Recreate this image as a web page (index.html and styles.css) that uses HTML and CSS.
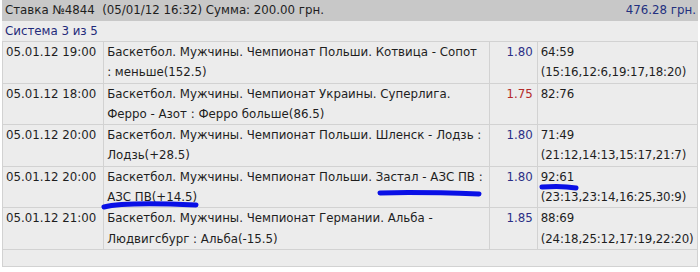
FILE: index.html
```html
<!DOCTYPE html>
<html lang="ru">
<head>
<meta charset="utf-8">
<link rel="stylesheet" href="styles.css">
</head>
<body>
<div class="bet">
  <div class="bet-head">
    <span class="bet-title">Ставка №4844&nbsp;&nbsp;(05/01/12 16:32) Сумма: 200.00 грн.</span>
    <span class="bet-win">476.28 грн.</span>
  </div>
  <div class="bet-system">Система 3 из 5</div>
  <table class="events">
    <tr>
      <td class="date">05.01.12 19:00</td>
      <td class="event">Баскетбол. Мужчины. Чемпионат Польши. Котвица - Сопот<br>: меньше(152.5)</td>
      <td class="odd">1.80</td>
      <td class="score">64:59<br>(15:16,12:6,19:17,18:20)</td>
    </tr>
    <tr>
      <td class="date">05.01.12 18:00</td>
      <td class="event">Баскетбол. Мужчины. Чемпионат Украины. Суперлига.<br>Ферро - Азот : Ферро больше(86.5)</td>
      <td class="odd lost">1.75</td>
      <td class="score">82:76<br>&nbsp;</td>
    </tr>
    <tr>
      <td class="date">05.01.12 20:00</td>
      <td class="event">Баскетбол. Мужчины. Чемпионат Польши. Шленск - Лодзь :<br>Лодзь(+28.5)</td>
      <td class="odd">1.80</td>
      <td class="score">71:49<br>(21:12,14:13,15:17,21:7)</td>
    </tr>
    <tr>
      <td class="date">05.01.12 20:00</td>
      <td class="event">Баскетбол. Мужчины. Чемпионат Польши. Застал - АЗС ПВ :<br>АЗС ПВ(+14.5)</td>
      <td class="odd">1.80</td>
      <td class="score">92:61<br>(23:13,23:14,16:25,30:9)</td>
    </tr>
    <tr>
      <td class="date">05.01.12 21:00</td>
      <td class="event">Баскетбол. Мужчины. Чемпионат Германии. Альба -<br>Людвигсбург : Альба(-15.5)</td>
      <td class="odd">1.85</td>
      <td class="score">88:69<br>(24:18,25:12,17:19,22:20)</td>
    </tr>
    <tr class="empty"><td colspan="4"></td></tr>
  </table>
  <svg class="marks" width="700" height="272" viewBox="0 0 700 272">
    <path d="M104 207 C 120 203, 150 203, 196 205" stroke="#0a10e6" stroke-width="5" fill="none" stroke-linecap="round"/>
    <path d="M380 193 C 410 192, 450 193, 479 194" stroke="#0a10e6" stroke-width="5" fill="none" stroke-linecap="round"/>
    <path d="M542 187 C 555 186, 565 186, 576 188" stroke="#0a10e6" stroke-width="5" fill="none" stroke-linecap="round"/>
  </svg>
</div>
</body>
</html>
```
FILE: styles.css
```css
html, body {
  margin: 0;
  padding: 0;
  background: #ffffff;
}
body {
  font-family: "DejaVu Sans", Verdana, sans-serif;
  font-size: 11.8px;
  color: #1e1e1e;
}
.bet {
  position: relative;
  width: 696px;
  margin: 0 0 0 2px;
}
.bet-head {
  display: flex;
  justify-content: space-between;
  background: #c8c8c8;
  height: 21px;
  line-height: 21px;
  padding: 0 2px 0 3px;
}
.bet-win {
  color: #23307f;
}
.bet-system {
  background: #ececec;
  color: #1f2a7a;
  height: 20px;
  line-height: 20px;
  padding: 0 3px;
}
.events {
  width: 696px;
  border-collapse: collapse;
  background: #ececec;
  table-layout: fixed;
}
.events td {
  border: 1px solid #d2d2d2;
  vertical-align: top;
  line-height: 20.3px;
  padding: 0 3px 0 3px;
  white-space: nowrap;
  overflow: hidden;
}
.events td.date { width: 94px; }
.events td.event { width: 378px; }
.events td.odd {
  width: 41px;
  text-align: right;
  color: #2b2f86;
  padding-right: 4px;
  padding-left: 2px;
}
.events td.odd.lost {
  color: #b42a2a;
}
.events td.score {
  width: 153px;
  letter-spacing: -0.15px;
}
.events tr.empty td {
  height: 16px;
  padding: 0;
}
.marks {
  position: absolute;
  left: -2px;
  top: 0;
  pointer-events: none;
}
```
